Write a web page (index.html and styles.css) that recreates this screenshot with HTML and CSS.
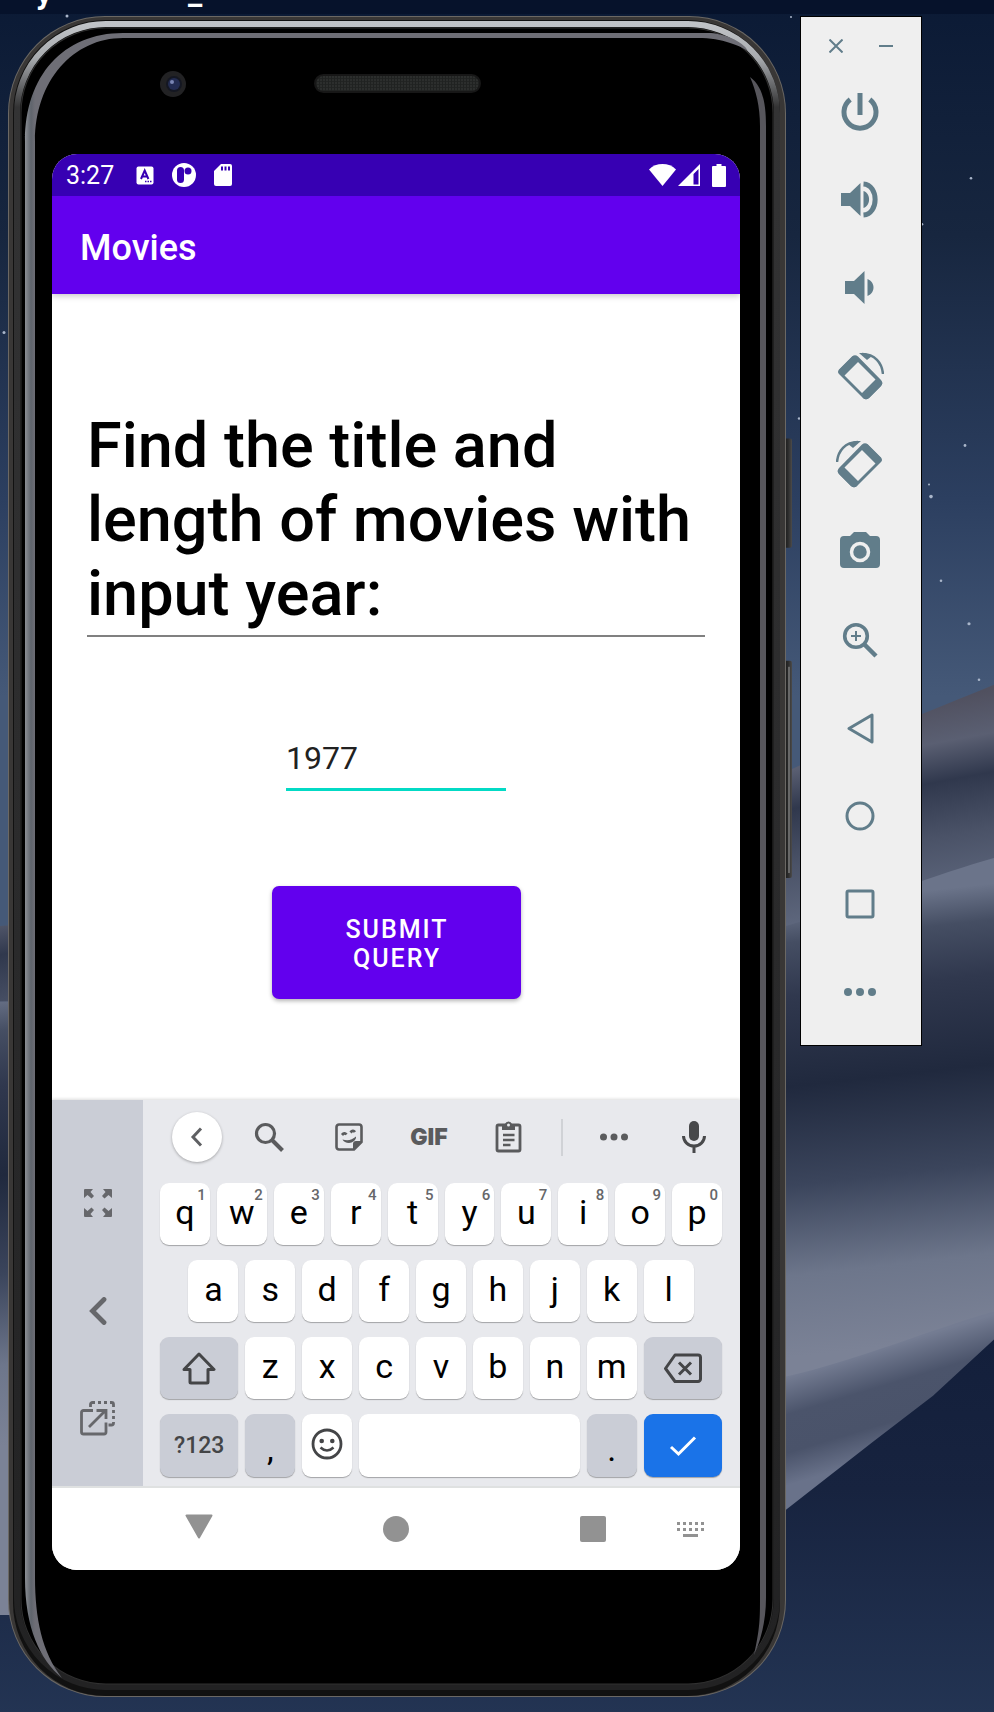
FILE: index.html
```html
<!DOCTYPE html>
<html lang="en">
<head>
<meta charset="utf-8">
<meta name="viewport" content="width=device-width, initial-scale=1">
<title>Movies</title>
<link rel="stylesheet" href="styles.css">
</head>
<body>
<div class="desktop">
  <svg class="wallpaper" viewBox="0 0 994 1712" preserveAspectRatio="none" aria-hidden="true">
    <defs>
      <linearGradient id="sky" x1="0" y1="0" x2="0" y2="1"><stop offset="0" stop-color="#0b1a35"/><stop offset=".25" stop-color="#17263f"/><stop offset=".53" stop-color="#2c3f60"/><stop offset=".74" stop-color="#455978"/><stop offset="1" stop-color="#455978"/></linearGradient>
      <linearGradient id="duneA" gradientUnits="userSpaceOnUse" x1="930" y1="700" x2="965" y2="890"><stop offset="0" stop-color="#50505f"/><stop offset=".22" stop-color="#5a5f72"/><stop offset=".42" stop-color="#30384d"/><stop offset=".7" stop-color="#4a5267"/><stop offset="1" stop-color="#5d667c"/></linearGradient>
      <linearGradient id="duneB" gradientUnits="userSpaceOnUse" x1="880" y1="895" x2="930" y2="1340"><stop offset="0" stop-color="#6b748a"/><stop offset=".08" stop-color="#454e63"/><stop offset=".2" stop-color="#30384e"/><stop offset=".4" stop-color="#20293e"/><stop offset=".62" stop-color="#3b455c"/><stop offset=".82" stop-color="#6d768b"/><stop offset="1" stop-color="#7b8296"/></linearGradient>
      <linearGradient id="duneC" gradientUnits="userSpaceOnUse" x1="870" y1="1350" x2="900" y2="1450"><stop offset="0" stop-color="#747c92"/><stop offset=".35" stop-color="#4b546b"/><stop offset=".7" stop-color="#4a536a"/><stop offset="1" stop-color="#69728a"/></linearGradient>
      <linearGradient id="sand" x1="0" y1="0" x2="0" y2="1"><stop offset="0" stop-color="#131f3b"/><stop offset=".4" stop-color="#17233f"/><stop offset="1" stop-color="#233453"/></linearGradient>
    </defs>
    <rect width="994" height="940" fill="url(#sky)"/>
    <path d="M0 925 C300 900 600 850 792 768 C850 742 930 710 994 684 V1000 H0Z" fill="url(#duneA)"/>
    <path d="M0 1000 C400 1000 650 960 786 925 C860 903 940 872 994 857 V1712 H0Z" fill="url(#duneB)"/>
    <path d="M500 1420 L786 1375 C860 1358 930 1328 994 1310 V1345 L786 1515 L500 1600Z" fill="url(#duneC)"/>
    <path d="M0 1613 H500 L786 1508 L873 1440 L933 1394 L994 1338 V1712 H0Z" fill="url(#sand)"/>
    <g fill="#aab6ca"><circle cx="971" cy="178" r="1.3"/><circle cx="922" cy="224" r="1.3"/><circle cx="965" cy="445" r="1.4"/><circle cx="931" cy="496" r="1.8"/><circle cx="929" cy="484" r="1"/><circle cx="799" cy="418" r="1.2"/><circle cx="941" cy="580" r="1.3"/><circle cx="969" cy="623" r="1.6"/><circle cx="979" cy="679" r="1.3"/><circle cx="67" cy="16" r="1.5"/><circle cx="791" cy="17" r="1"/><circle cx="4" cy="332" r="1.5"/></g>
  </svg>

  <div class="menubar" aria-hidden="true"><span>y</span><span>_</span></div>

  <div class="workspace">
    <div class="phone">
      <svg class="bezel" viewBox="0 0 784 1680" preserveAspectRatio="none" aria-hidden="true">
        <defs>
          <linearGradient id="rim" x1="0" y1="0" x2="0" y2="1"><stop offset="0" stop-color="#c0c3c7"/><stop offset=".02" stop-color="#a9acb0"/><stop offset=".05" stop-color="#333334"/><stop offset="1" stop-color="#222223"/></linearGradient>
          <linearGradient id="glass" gradientUnits="userSpaceOnUse" x1="17" y1="0" x2="27" y2="0"><stop offset="0" stop-color="#8b8f95"/><stop offset=".6" stop-color="#5f646c"/><stop offset="1" stop-color="#6e6e76"/></linearGradient>
          <linearGradient id="side"><stop offset="0" stop-color="#111"/><stop offset=".6" stop-color="#2a2a2a"/><stop offset="1" stop-color="#4c4b4a"/></linearGradient>
          <pattern id="mesh" width="3" height="3" patternUnits="userSpaceOnUse"><rect width="3" height="3" fill="#202221"/><circle cx="1" cy="1" r="1" fill="#303231"/></pattern>
        </defs>
        <rect x="774" y="422" width="10" height="109" rx="2" fill="url(#side)"/>
        <rect x="774" y="644" width="10" height="217" rx="2" fill="url(#side)"/>
        <rect x="780" y="650" width="2" height="206" fill="#686868"/>
        <rect x="0" y="0" width="778" height="1679" rx="97" fill="#6b6864"/>
        <rect x="1" y="1" width="776" height="1677" rx="96" fill="#393736"/>
        <rect x="5" y="4" width="767" height="1674" rx="93" fill="#111111"/>
        <rect x="9" y="8" width="760" height="1661" rx="89" fill="none" stroke="url(#rim)" stroke-width="6"/>
        <rect x="13" y="12" width="752" height="1654" rx="85" fill="#000" stroke="#303030"/>
        <path d="M700 17H115C55 17 17 60 17 125V1560C17 1610 32 1642 54 1660C34 1635 27 1600 27 1560V125C27 65 65 22 115 22H690C715 22 732 30 740 35C735 25 715 17 700 17Z" fill="url(#glass)"/>
        <path d="M742 61C754 70 758 85 758 110V1580C758 1600 754 1620 746 1637C752 1610 752 1600 752 1580V110C752 90 748 75 742 61Z" fill="#57565c"/>
        <circle cx="165" cy="68" r="13" fill="#222224"/><circle cx="166" cy="68" r="8" fill="#141722"/><circle cx="166" cy="68" r="6" fill="#232c52"/><circle cx="164" cy="66" r="2" fill="#7a86b4"/>
        <rect x="307" y="59" width="165" height="17" rx="8.5" fill="url(#mesh)" stroke="#171717" stroke-width="2"/>
      </svg>

      <div class="screen">
        <header class="status">
          <span class="clock">3:27</span>
          <div class="notices">
            <svg width="18" height="19" viewBox="0 0 18 19" aria-hidden="true"><rect width="17" height="18" x=".5" y=".5" rx="2" fill="#fff"/><path d="M5 13L8.7 4.500L12.400 13M6.200 10.500H11.200" fill="none" stroke="#3700b3" stroke-width="2"/><path d="M9 15.500h1.500m1 0h1.500m1 0h1.500" stroke="#3700b3" stroke-width="1.500"/></svg>
            <svg width="24" height="24" viewBox="0 0 24 24" aria-hidden="true"><circle cx="12" cy="12" r="12" fill="#fff"/><rect x="5" y="4" width="7" height="16" rx="3.500" fill="#3700b3"/><circle cx="16" cy="8" r="3.500" fill="#3700b3"/></svg>
            <svg width="18" height="22" viewBox="0 0 18 22" aria-hidden="true"><path d="M7 0H16a2 2 0 0 1 2 2V20a2 2 0 0 1-2 2H2a2 2 0 0 1-2-2V7Z" fill="#fff"/><path d="M8 2.500v4m3.500-4v4m3.500-4v4" stroke="#3700b3" stroke-width="2"/></svg>
          </div>
          <div class="signals">
            <svg width="27" height="22" viewBox="0 0 27 22" aria-hidden="true"><path d="M13.500 22L0 5.500C7-1.800 20-1.800 27 5.500Z" fill="#fff"/></svg>
            <svg width="22" height="22" viewBox="0 0 22 22" aria-hidden="true"><path d="M22 0V22H0ZM20.500 5L15.500 10V20.500H20.500Z" fill="#fff" fill-rule="evenodd"/></svg>
            <svg class="battery" width="14" height="23" viewBox="0 0 14 23" aria-hidden="true"><path d="M4.500 0h5v2H13a1 1 0 0 1 1 1V22a1 1 0 0 1-1 1H1a1 1 0 0 1-1-1V3a1 1 0 0 1 1-1H4.500Z" fill="#fff"/></svg>
          </div>
        </header>
        <div class="appbar">Movies</div>

        <main class="content">
          <h1 class="prompt"><label for="year">Find the title and length of movies with input year:</label></h1>
          <input class="year" id="year" type="text" inputmode="numeric" value="1977">
          <button class="submit" type="button">SUBMIT QUERY</button>
        </main>

        <section class="keyboard" aria-label="Keyboard">
          <div class="rail">
            <button type="button" aria-label="Expand"><svg width="28" height="28" viewBox="0 0 28 28"><g fill="#66676b"><path id="corner" d="M0 1a1 1 0 0 1 1-1H9L6.500 3L10 7L7.500 9.500L3.500 6L0 9Z"/><use href="#corner" transform="translate(28) scale(-1 1)"/><use href="#corner" transform="translate(0 28) scale(1 -1)"/><use href="#corner" transform="translate(28 28) scale(-1 -1)"/></g></svg></button>
            <button type="button" aria-label="Move left"><svg width="18" height="28" viewBox="0 0 18 28"><path d="M15 2.500L3.500 14L15 25.500" fill="none" stroke="#66676b" stroke-width="4.800" stroke-linecap="round"/></svg></button>
            <button type="button" aria-label="Float keyboard"><svg width="35" height="35" viewBox="0 0 35 35" fill="none" stroke="#66676b" stroke-width="2.800"><path d="M13 9.500H3.500a2 2 0 0 0-2 2V31a2 2 0 0 0 2 2H24a2 2 0 0 0 2-2V21.500M9 26L25 10M16.500 9.500H26V18"/><path d="M10.500 6V3.500a2 2 0 0 1 2-2H15m3 0h3m3 0h3m3 0h1.500a2 2 0 0 1 2 2V6m0 3v3m0 3v3m0 3v1a2 2 0 0 1-2 2h-3"/></svg></button>
          </div>
          <div class="pad">
            <div class="tools">
              <button class="round" type="button" aria-label="Back"><svg width="14" height="20" viewBox="0 0 14 20"><path d="M11 1.500L3 10L11 18.500" fill="none" stroke="#5f6063" stroke-width="3"/></svg></button>
              <button type="button" aria-label="Search"><svg width="30" height="30" viewBox="0 0 30 30" fill="none" stroke="#5a5b5d" stroke-width="3.200"><circle cx="11.500" cy="11.500" r="9"/><path d="M18 18L28.500 28.500" stroke-width="4"/></svg></button>
              <button type="button" aria-label="Stickers"><svg width="28" height="28" viewBox="0 0 28 28"><path d="M4 1.500H24a2.500 2.500 0 0 1 2.500 2.500V19L19 26.500H4A2.500 2.500 0 0 1 1.500 24V4A2.500 2.500 0 0 1 4 1.500Z" fill="none" stroke="#5a5b5d" stroke-width="2.600"/><path d="M18 27V21a3 3 0 0 1 3-3h6ZM7.500 16.500C13 18 17 17 21 13.500C21.500 17 17.500 20 14 20C11 20 8.500 18.500 7.500 16.500Z" fill="#5a5b5d"/><path d="M7 12q2.500-3 4.500-.500M15.500 9.500q2.500-3 4.500-.500" fill="none" stroke="#5a5b5d" stroke-width="2.800"/></svg></button>
              <button class="gif" type="button">GIF</button>
              <button type="button" aria-label="Clipboard"><svg width="28" height="32" viewBox="0 0 28 32"><rect x="2" y="4" width="23" height="26" rx="1.500" fill="none" stroke="#5a5b5d" stroke-width="2.800"/><path d="M7 3H10a3.700 3.700 0 0 1 7 0H20V9H7Z" fill="#5a5b5d"/><circle cx="13.500" cy="4" r="1.500" fill="#e8eaed"/><path d="M8 14H19.500M8 19H19.500M8 24H15.500" stroke="#5a5b5d" stroke-width="2.600"/></svg></button>
              <span class="rule"></span>
              <button type="button" aria-label="More"><svg width="30" height="8" viewBox="0 0 30 8" fill="#5a5b5d"><circle cx="4.500" cy="4" r="3.500"/><circle cx="15" cy="4" r="3.500"/><circle cx="25.500" cy="4" r="3.500"/></svg></button>
              <button type="button" aria-label="Voice input"><svg width="24" height="32" viewBox="0 0 24 32"><rect x="7" width="10" height="20" rx="5" fill="#48494b"/><path d="M1.500 15a10.500 10 0 0 0 21 0M12 25v7" fill="none" stroke="#48494b" stroke-width="3"/></svg></button>
            </div>
            <div class="keys">
              <button class="key" type="button">q<span class="hint">1</span></button>
              <button class="key" type="button">w<span class="hint">2</span></button>
              <button class="key" type="button">e<span class="hint">3</span></button>
              <button class="key" type="button">r<span class="hint">4</span></button>
              <button class="key" type="button">t<span class="hint">5</span></button>
              <button class="key" type="button">y<span class="hint">6</span></button>
              <button class="key" type="button">u<span class="hint">7</span></button>
              <button class="key" type="button">i<span class="hint">8</span></button>
              <button class="key" type="button">o<span class="hint">9</span></button>
              <button class="key" type="button">p<span class="hint">0</span></button>

              <button class="key indent" type="button">a</button>
              <button class="key" type="button">s</button>
              <button class="key" type="button">d</button>
              <button class="key" type="button">f</button>
              <button class="key" type="button">g</button>
              <button class="key" type="button">h</button>
              <button class="key" type="button">j</button>
              <button class="key" type="button">k</button>
              <button class="key" type="button">l</button>

              <button class="key wide gray row-start" type="button" aria-label="Shift"><svg width="34" height="33" viewBox="0 0 34 33"><path d="M17 2L32 17.500H26V30a1 1 0 0 1-1 1H9a1 1 0 0 1-1-1V17.500H2Z" fill="none" stroke="#444547" stroke-width="3" stroke-linejoin="round"/></svg></button>
              <button class="key" type="button">z</button>
              <button class="key" type="button">x</button>
              <button class="key" type="button">c</button>
              <button class="key" type="button">v</button>
              <button class="key" type="button">b</button>
              <button class="key" type="button">n</button>
              <button class="key" type="button">m</button>
              <button class="key wide gray" type="button" aria-label="Backspace"><svg width="38" height="31" viewBox="0 0 38 31" fill="none" stroke="#444547" stroke-width="3" stroke-linejoin="round"><path d="M11 2H34a2.500 2.500 0 0 1 2.500 2.500V26a2.500 2.500 0 0 1-2.500 2.500H11L1.500 15.500Z"/><path d="M15 9.500L27 21.500M27 9.500L15 21.500"/></svg></button>

              <button class="key tall wide gray symbols row-start" type="button">?123</button>
              <button class="key tall gray punct" type="button">,</button>
              <button class="key tall" type="button" aria-label="Emoji"><svg width="32" height="32" viewBox="0 0 32 32"><circle cx="16" cy="16" r="14" fill="none" stroke="#444547" stroke-width="2.800"/><circle cx="10.700" cy="13" r="2.300" fill="#444547"/><circle cx="21.300" cy="13" r="2.300" fill="#444547"/><path d="M9.500 19.500q6.500 6 13 0" fill="none" stroke="#444547" stroke-width="2.600"/></svg></button>
              <button class="key tall space" type="button" aria-label="Space"></button>
              <button class="key tall gray punct" type="button">.</button>
              <button class="key tall wide enter" type="button" aria-label="Done"><svg width="28" height="22" viewBox="0 0 28 22"><path d="M2 12L9.500 19L26 2.500" fill="none" stroke="#fff" stroke-width="3"/></svg></button>
            </div>
          </div>
        </section>

        <nav class="navbar" aria-label="System navigation">
          <button class="nav-back" type="button" aria-label="Back"><svg width="28" height="25" viewBox="0 0 28 25"><path d="M1.500 1.500H26.500L14 23.500Z" fill="#929292" stroke="#929292" stroke-width="2" stroke-linejoin="round"/></svg></button>
          <button class="nav-home" type="button" aria-label="Home"><svg width="26" height="26" viewBox="0 0 26 26"><circle cx="13" cy="13" r="13" fill="#929292"/></svg></button>
          <button class="nav-recent" type="button" aria-label="Overview"><svg width="26" height="26" viewBox="0 0 26 26"><rect width="26" height="26" rx="2" fill="#929292"/></svg></button>
          <button type="button" aria-label="Switch keyboard"><svg width="27" height="15" viewBox="0 0 27 15" stroke="#929292" stroke-width="3"><path d="M0 1.500H27M0 7.500H27" stroke-dasharray="3"/><path d="M6 13.500H21"/></svg></button>
        </nav>
      </div>
    </div>

    <aside class="emulator" aria-label="Emulator controls">
      <div class="window-controls">
        <button type="button" aria-label="Close"><svg width="14" height="14" viewBox="0 0 14 14"><path d="M.500 .500L13.500 13.500M13.500 .500L.500 13.500" stroke="#617d8a" stroke-width="2"/></svg></button>
        <button type="button" aria-label="Minimize"><svg width="14" height="14" viewBox="0 0 14 14"><path d="M0 7H14" stroke="#617d8a" stroke-width="2"/></svg></button>
      </div>
      <button type="button" aria-label="Power"><svg width="38" height="38" viewBox="0 0 38 38" fill="none" stroke="#617d8a" stroke-width="5"><path d="M9.200 6.500A16 16 0 1 0 28.800 6.500M19 0V22"/></svg></button>
      <button type="button" aria-label="Volume up"><svg width="38" height="38" viewBox="0 0 38 38" fill="#617d8a"><path d="M0 12H9L19.500 2V35L9 25H0ZM22.500 10C30 12 30 25 22.500 27Z"/><path d="M22.500 3C38 4 38 33 22.500 34" fill="none" stroke="#617d8a" stroke-width="5"/></svg></button>
      <button type="button" aria-label="Volume down"><svg width="30" height="34" viewBox="0 0 30 34" fill="#617d8a"><path d="M0 10H9L19.500 0V33L9 23H0ZM22.500 8C30.500 11 30.500 22 22.500 25Z"/></svg></button>
      <button type="button" aria-label="Rotate left"><svg width="48" height="48" viewBox="0 0 48 48"><g id="rotate" fill="#617d8a"><path d="M3 17.500L16 4.500Q19 2 22 4.500L45 28Q47.500 31 45 34L33 46Q30 48.500 27 46L3 22Q1 20 3 17.500ZM7.500 22.500L27 42L40.500 28.500L21 9Z" fill-rule="evenodd"/><path d="M3 18L17 4L22.500 9.500L8 24ZM25.500 41.500L40 27L46 30Q47 32 45 34L33 46Q30 48.500 27 46Z"/><path d="M23 1H29L36 4L31 8Z"/><path d="M26 2C39 2 46 11 47 22" fill="none" stroke="#617d8a" stroke-width="2.500"/></g></svg></button>
      <button type="button" aria-label="Rotate right"><svg width="48" height="48" viewBox="0 0 48 48"><use href="#rotate" transform="translate(48) scale(-1 1)"/></svg></button>
      <button class="shot" type="button" aria-label="Take screenshot"><svg width="40" height="36" viewBox="0 0 40 36"><path d="M4 4H10L14 0H26L30 4H36a4 4 0 0 1 4 4V32a4 4 0 0 1-4 4H4a4 4 0 0 1-4-4V8a4 4 0 0 1 4-4Z" fill="#617d8a"/><circle cx="20" cy="20" r="8.500" fill="none" stroke="#efefef" stroke-width="3.500"/></svg></button>
      <button type="button" aria-label="Zoom"><svg width="36" height="36" viewBox="0 0 36 36" fill="none" stroke="#617d8a"><circle cx="14" cy="14" r="11.300" stroke-width="3.600"/><path d="M22.500 22.500L34 34" stroke-width="4.500"/><path d="M14 9V19M9 14H19" stroke-width="2"/></svg></button>
      <button type="button" aria-label="Back"><svg width="27" height="31" viewBox="0 0 27 31"><path d="M25 2V29L2 15.500Z" fill="none" stroke="#617d8a" stroke-width="3" stroke-linejoin="round"/></svg></button>
      <button type="button" aria-label="Home"><svg width="30" height="30" viewBox="0 0 30 30"><circle cx="15" cy="15" r="13" fill="none" stroke="#617d8a" stroke-width="3"/></svg></button>
      <button type="button" aria-label="Overview"><svg width="30" height="30" viewBox="0 0 30 30"><rect x="2" y="2" width="26" height="26" rx="1.500" fill="none" stroke="#617d8a" stroke-width="3"/></svg></button>
      <button type="button" aria-label="More"><svg width="32" height="8" viewBox="0 0 32 8" fill="#617d8a"><circle cx="4" cy="4" r="4"/><circle cx="16" cy="4" r="4"/><circle cx="28" cy="4" r="4"/></svg></button>
    </aside>
  </div>
</div>
</body>
</html>
```
FILE: styles.css
```css
* { box-sizing: border-box; }
body { margin: 0; font-family: Roboto, "Liberation Sans", sans-serif; }
button { border: 0; padding: 0; margin: 0; background: none; font: inherit; color: inherit; display: flex; align-items: center; justify-content: center; min-width: 0; }
svg { display: block; flex: none; }

.desktop { position: relative; min-height: 100vh; overflow: hidden; background: #16223f; }
.wallpaper { position: absolute; inset: 0; width: 100%; height: 100%; }
.menubar { position: relative; display: flex; align-items: flex-end; gap: 136px; height: 14px; padding: 0 36px 10px; overflow: hidden; background: #06122b; color: #fff; font-size: 32px; line-height: 22px; font-weight: 700; }
.workspace { position: relative; display: flex; align-items: flex-start; gap: 8px; padding: 2px 72px 16px 8px; }

.phone { position: relative; flex: 1; min-width: 0; padding: 138px 52px 128px 44px; }
.bezel { position: absolute; inset: 0; width: 100%; height: 100%; }
.screen { position: relative; border-radius: 25px; overflow: hidden; background: #fff; }

.status { position: relative; z-index: 1; display: flex; align-items: center; height: 42px; padding: 0 14px; background: #3700b3; color: #fff; }
.clock { padding-top: 2px; font-size: 25px; line-height: 30px; }
.notices { display: flex; align-items: center; gap: 18px; margin-left: 22px; }
.signals { display: flex; align-items: center; gap: 2px; margin-left: auto; }
.battery { margin-left: 10px; }
.appbar { position: relative; padding: 31px 28px 25px; background: #6200ee; color: #fff; font-size: 36px; line-height: 42px; font-weight: 500; box-shadow: 0 2px 6px rgba(0, 0, 0, .22); }

.content { display: flex; flex-direction: column; align-items: center; padding: 115px 35px 101px; }
.prompt { width: 100%; margin: 0 0 102px; padding-bottom: 4px; border-bottom: 2px solid #808080; font-size: 63px; line-height: 74px; font-weight: 500; color: #000; }
.prompt label { display: block; }
.year { width: 220px; height: 52px; margin: 0 0 95px; padding: 0 0 11px; border: 0; border-bottom: 3px solid #03dac5; border-radius: 0; outline: 0; background: none; font: 400 32px/38px Roboto, "Liberation Sans", sans-serif; color: #212121; }
.submit { width: 249px; padding: 29px 28px 26px 30px; border-radius: 7px; background: #6200ee; color: #fff; font-size: 25px; line-height: 29px; font-weight: 500; letter-spacing: 2px; text-align: center; box-shadow: 0 2px 4px rgba(0, 0, 0, .3); }

.keyboard { display: flex; border-bottom: 2px solid #dfe1e1; background: #e8e9ed; box-shadow: 0 -1px 3px rgba(0, 0, 0, .14); }
.rail { display: flex; flex-direction: column; width: 91px; padding: 49px 0 14px; background: #cacdd6; }
.rail button { flex: 1; }
.pad { flex: 1; min-width: 0; }
.tools { display: grid; grid-template-columns: 64fr 80fr 80fr 80fr 80fr 25fr 80fr 80fr; align-items: center; height: 74px; padding: 0 6px 0 22px; }
.round { justify-self: center; width: 50px; height: 50px; border-radius: 50%; background: #fff; box-shadow: 0 1px 3px rgba(0, 0, 0, .3); }
.gif { font-family: Inter, Roboto, sans-serif; font-size: 23px; line-height: 28px; font-weight: 900; color: #5a5b5d; }
.rule { justify-self: center; width: 2px; height: 37px; background: #d0d2d6; }
.keys { display: grid; grid-template-columns: repeat(20, minmax(0, 1fr)); gap: 15px 7px; padding: 9px 18px 9px 17px; }
.key { position: relative; grid-column: span 2; height: 62px; padding-bottom: 4px; border-radius: 9px; background: #fff; color: #000; font-size: 34px; line-height: 40px; box-shadow: 0 1px 1px rgba(0, 0, 0, .3); }
.tall { height: 63px; }
.indent { grid-column: 2 / span 2; }
.wide { grid-column: span 3; padding-bottom: 0; }
.row-start { grid-column: 1 / span 3; }
.space { grid-column: span 8; }
.gray { background: #cacdd6; }
.symbols { font-size: 23px; font-weight: 500; color: #444547; }
.punct { align-items: flex-end; padding-bottom: 8px; }
.enter { background: #1a73e8; }
.hint { position: absolute; top: 4px; right: 4px; font-size: 15px; line-height: 16px; font-weight: 500; color: #66676a; }

.navbar { display: grid; grid-template-columns: repeat(7, 1fr); height: 82px; background: #fff; }
.nav-back { grid-column: 2; padding-bottom: 6px; }
.nav-home { grid-column: 4; }
.nav-recent { grid-column: 6; }

.emulator { display: flex; flex-direction: column; width: 122px; padding-bottom: 9px; border: 1px solid #000; background: #efefef; }
.emulator > button { height: 88px; padding-right: 2px; }
.emulator > .shot { padding-bottom: 4px; }
.window-controls { display: flex; justify-content: center; gap: 36px; height: 51px; padding-top: 7px; }
```
